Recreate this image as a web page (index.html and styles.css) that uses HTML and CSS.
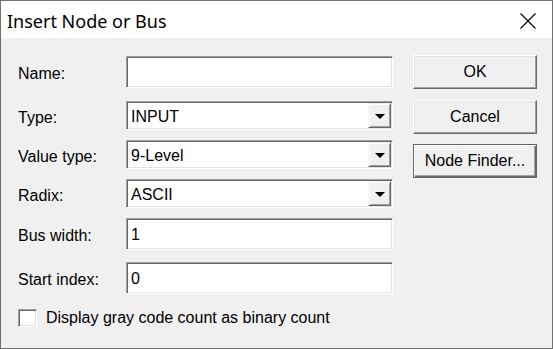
FILE: index.html
```html
<!DOCTYPE html>
<html lang="en">
<head>
<meta charset="UTF-8" />
<title>Insert Node or Bus</title>
<link rel="stylesheet" href="styles.css">
</head>
<body>

<div class="dialog">
  <div class="titlebar">
    <span class="title">Insert Node or Bus</span>
    <svg class="close" width="16" height="16" viewBox="0 0 16 16">
      <path d="M0.5 0.5 L15.5 15.5 M15.5 0.5 L0.5 15.5" stroke="#000" stroke-width="1.1" fill="none" />
    </svg>
  </div>

  <div class="dialog-body">
    <!-- Felter -->
    <div class="fields">
      <div class="row row-edit">
        <label>Name:</label>
        <div class="field"></div>
      </div>
      <div class="row row-combo">
        <label>Type:</label>
        <div class="field combo"><span class="value">INPUT</span><span class="drop"><i class="arrow"></i></span></div>
      </div>
      <div class="row row-combo">
        <label>Value type:</label>
        <div class="field combo"><span class="value">9-Level</span><span class="drop"><i class="arrow"></i></span></div>
      </div>
      <div class="row row-combo">
        <label>Radix:</label>
        <div class="field combo"><span class="value">ASCII</span><span class="drop"><i class="arrow"></i></span></div>
      </div>
      <div class="row row-edit row-bus">
        <label>Bus width:</label>
        <div class="field"><span class="value">1</span></div>
      </div>
      <div class="row row-edit">
        <label>Start index:</label>
        <div class="field"><span class="value">0</span></div>
      </div>

      <div class="check">
        <span class="box"></span>
        <span>Display gray code count as binary count</span>
      </div>
    </div>

    <!-- Knapper -->
    <div class="buttons">
      <button type="button" class="btn">OK</button>
      <button type="button" class="btn">Cancel</button>
      <button type="button" class="btn btn-default">Node Finder...</button>
    </div>
  </div>
</div>

</body>
</html>
```

FILE: styles.css
```css
body {
  margin: 0;
  font-family: 'Liberation Sans', Arial, sans-serif;
  font-size: 16px;
  color: #000;
  background: #f0f0f0;
}
.dialog {
  width: 553px;
  height: 349px;
  box-sizing: border-box;
  border: 1px solid #707070;
  background: #f0f0f0;
  display: flex;
  flex-direction: column;
}
.titlebar {
  height: 37px;
  background: #fff;
  display: flex;
  align-items: center;
  padding-left: 6px;
  padding-right: 16px;
}
.title {
  font-family: 'Noto Sans', 'Open Sans', sans-serif;
  font-size: 18px;
  flex: 1;
  margin-top: 3px;
}
.close {
  margin-top: 3px;
}
.dialog-body {
  display: flex;
  padding: 18px 0 0 17px;
}
.fields {
  width: 375px;
}
.row {
  display: flex;
  align-items: center;
}
.row label {
  width: 108px;
  padding-top: 4px;
}
.row-edit {
  height: 32px;
  margin-bottom: 12px;
}
.row-edit:first-child {
  margin-bottom: 13px;
}
.row-combo {
  height: 29px;
  margin-bottom: 10px;
}
.field {
  width: 267px;
  height: 100%;
  box-sizing: border-box;
  background: #fff;
  border: 1px solid;
  border-color: #a0a0a0 #fff #fff #a0a0a0;
  box-shadow: inset 1px 1px 0 #696969, inset -1px -1px 0 #e3e3e3;
  padding: 1px;
  display: flex;
  align-items: center;
}
.value {
  flex: 1;
  padding-left: 3px;
  padding-top: 2px;
}
.drop {
  width: 23px;
  height: 100%;
  box-sizing: border-box;
  background: #f0f0f0;
  border: 1px solid;
  border-color: #f0f0f0 #696969 #696969 #f0f0f0;
  box-shadow: inset 1px 1px 0 #fff, inset -1px -1px 0 #a0a0a0;
  display: flex;
  align-items: center;
  justify-content: center;
}
.arrow {
  width: 0;
  height: 0;
  border-left: 5px solid transparent;
  border-right: 5px solid transparent;
  border-top: 5px solid #000;
  margin-top: 1px;
}
.check {
  display: flex;
  align-items: center;
  margin-top: 15px;
}
.box {
  width: 19px;
  height: 18px;
  box-sizing: border-box;
  background: #fff;
  border: 1px solid;
  border-color: #a0a0a0 #fff #fff #a0a0a0;
  box-shadow: inset 1px 1px 0 #696969, inset -1px -1px 0 #e3e3e3;
  margin-right: 9px;
}
.buttons {
  display: flex;
  flex-direction: column;
  gap: 10px;
  margin-left: 20px;
  margin-top: -1px;
}
.btn {
  width: 124px;
  height: 34px;
  box-sizing: border-box;
  font-family: 'Liberation Sans', Arial, sans-serif;
  font-size: 16px;
  color: #000;
  background: #f0f0f0;
  border: 1px solid;
  border-color: #fff #696969 #696969 #fff;
  box-shadow: inset -1px -1px 0 #a0a0a0, inset 1px 1px 0 #e3e3e3;
  padding: 0;
}
.btn:first-child {
  margin-bottom: 1px;
}
.btn-default {
  border-color: #646464;
  box-shadow: inset 1px 1px 0 #fff, inset -1px -1px 0 #696969, inset -2px -2px 0 #a0a0a0;
}
```
